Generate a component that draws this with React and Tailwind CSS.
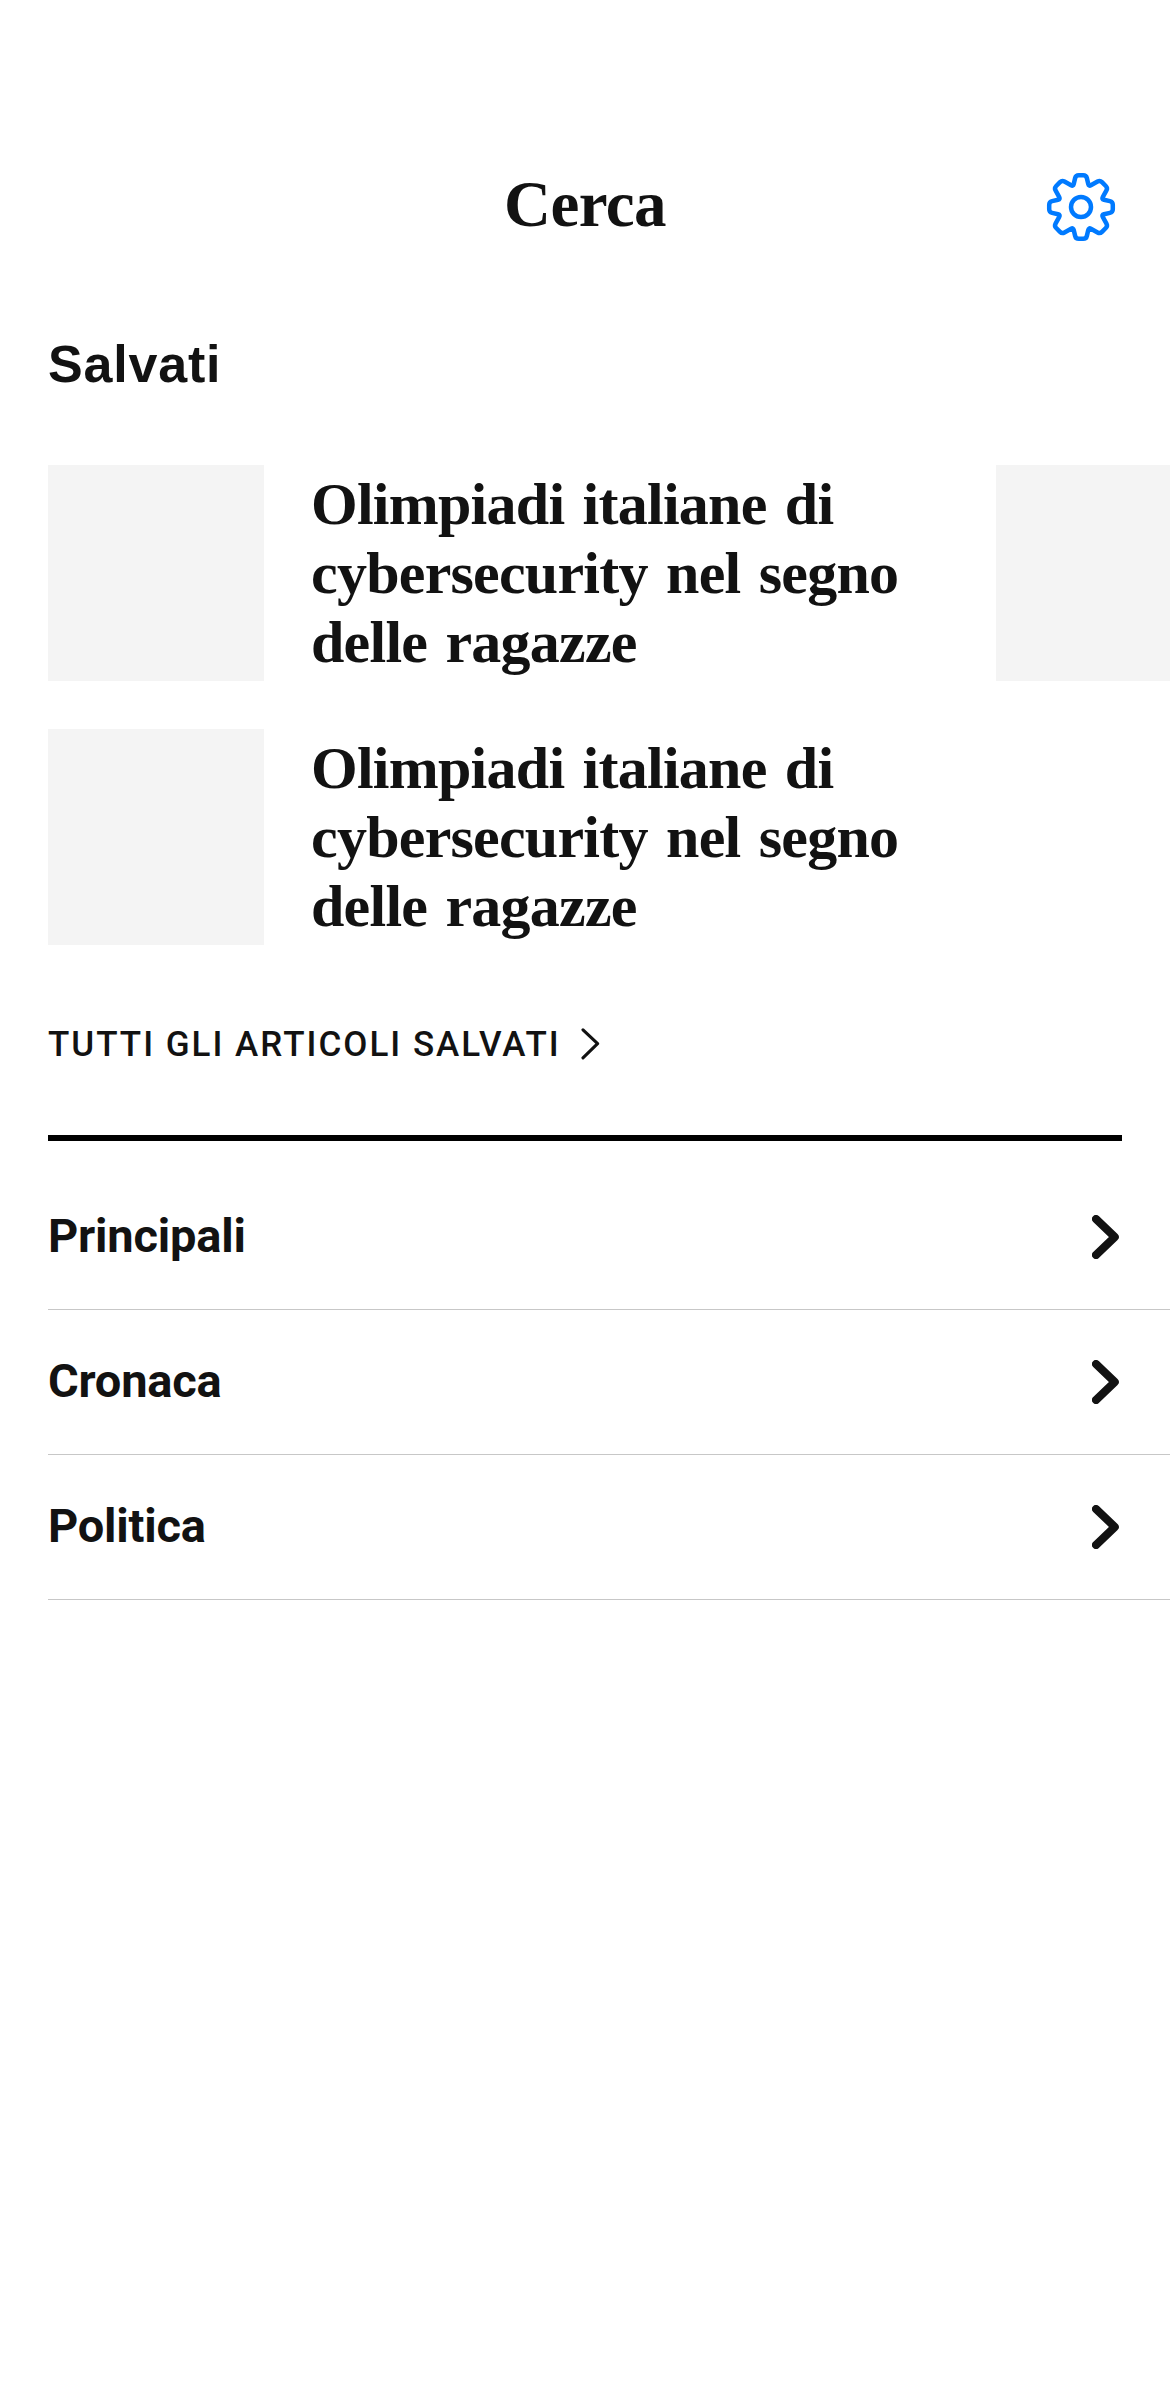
const savedColumns = [
  [
    ["Olimpiadi italiane di", "cybersecurity nel segno", "delle ragazze"],
    ["Olimpiadi italiane di", "cybersecurity nel segno", "delle ragazze"],
  ],
  [null],
];

const sections = ["Principali", "Cronaca", "Politica"];

const quarter = [
  [-5.2, -31.8, 3],
  [5.2, -31.8, 3],
  [7.8, -20.6, 2.4],
  [19, -26.8, 2.8],
  [26.8, -19, 2.8],
  [20.6, -7.8, 2.4],
];

// Closed gear outline around the origin with every corner rounded.
function gearOutline() {
  const pts = [];
  for (let k = 0; k < 4; k++) {
    for (const [x, y, r] of quarter) {
      let a = x;
      let b = y;
      for (let i = 0; i < k; i++) [a, b] = [-b, a];
      pts.push([a, b, r]);
    }
  }
  const toward = (p, q, r) => {
    const d = Math.hypot(q[0] - p[0], q[1] - p[1]);
    return `${(p[0] + ((q[0] - p[0]) * r) / d).toFixed(2)} ${(p[1] + ((q[1] - p[1]) * r) / d).toFixed(2)}`;
  };
  const n = pts.length;
  return (
    pts
      .map((p, i) => {
        const prev = pts[(i + n - 1) % n];
        const next = pts[(i + 1) % n];
        return `${i ? "L" : "M"}${toward(p, prev, p[2])}Q${p[0]} ${p[1]} ${toward(p, next, p[2])}`;
      })
      .join("") + "Z"
  );
}

function GearIcon() {
  return (
    <svg className="h-[82px] w-[82px]" viewBox="-41 -41 82 82" fill="none" stroke="#007aff" strokeWidth="4.5" strokeLinejoin="round">
      <path d={gearOutline()} />
      <circle r="10" />
    </svg>
  );
}

function Header() {
  return (
    <header className="grid h-[90px] grid-cols-[1fr_auto_1fr] items-center px-12">
      <span />
      <h1 className="pb-[7px] font-['Liberation_Serif',serif] text-[65px] leading-[80px] font-bold tracking-[-0.6px]">
        Cerca
      </h1>
      <button aria-label="Impostazioni" className="justify-self-end">
        <GearIcon />
      </button>
    </header>
  );
}

function SavedArticle({ lines }) {
  return (
    <article className="flex h-[216px] items-center gap-[47px]">
      <div className="h-[216px] w-[216px] shrink-0 bg-[#f4f4f4]" />
      {lines && (
        <h3 className="font-['Liberation_Serif',serif] text-[60px] leading-[69px] font-bold tracking-[-0.75px] whitespace-nowrap [word-spacing:4px]">
          {lines.map((line) => (
            <span key={line} className="block">
              {line}
            </span>
          ))}
        </h3>
      )}
    </article>
  );
}

function SectionRow({ title }) {
  return (
    <li className="flex h-[145px] items-center justify-between border-b border-[#c7c7c7] pr-12">
      <span className="pb-[2px] font-['Roboto',sans-serif] text-[47px] leading-[60px] font-bold tracking-[-0.2px]">{title}</span>
      <svg className="h-[44px] w-[30px]" viewBox="0 0 30 44" fill="none" stroke="#121212" strokeWidth="8" strokeLinecap="round" strokeLinejoin="round">
        <path d="M4 4L22.8 22L4 40" />
      </svg>
    </li>
  );
}

export default function App() {
  return (
    <main className="h-[2391px] w-[1170px] overflow-hidden bg-white pt-[162px] text-[#121212]">
      <Header />
      <section className="mt-[82px] pl-12">
        <h2 className="font-['Liberation_Sans',sans-serif] text-[52px] leading-[60px] font-bold tracking-[0.8px]">Salvati</h2>
        <div className="mt-[71px] flex overflow-hidden">
          {savedColumns.map((column, i) => (
            <div key={i} className="flex w-[948px] shrink-0 flex-col gap-12">
              {column.map((lines, j) => (
                <SavedArticle key={j} lines={lines} />
              ))}
            </div>
          ))}
        </div>
        <a className="mt-[79px] flex h-[40px] items-center gap-[19px]">
          <span className="pt-[2px] font-['Roboto',sans-serif] text-[35px] leading-[40px] font-medium tracking-[2px]">
            TUTTI GLI ARTICOLI SALVATI
          </span>
          <svg className="h-[32px] w-[20px]" viewBox="0 0 20 32" fill="none" stroke="#121212" strokeWidth="3.1" strokeLinecap="round" strokeLinejoin="round">
            <path d="M3 1.8L17.6 15.7L3 29.8" />
          </svg>
        </a>
        <div className="mt-[71px] mr-12 h-[6px] bg-black" />
      </section>
      <ul className="mt-6 pl-12">
        {sections.map((title) => (
          <SectionRow key={title} title={title} />
        ))}
      </ul>
    </main>
  );
}
